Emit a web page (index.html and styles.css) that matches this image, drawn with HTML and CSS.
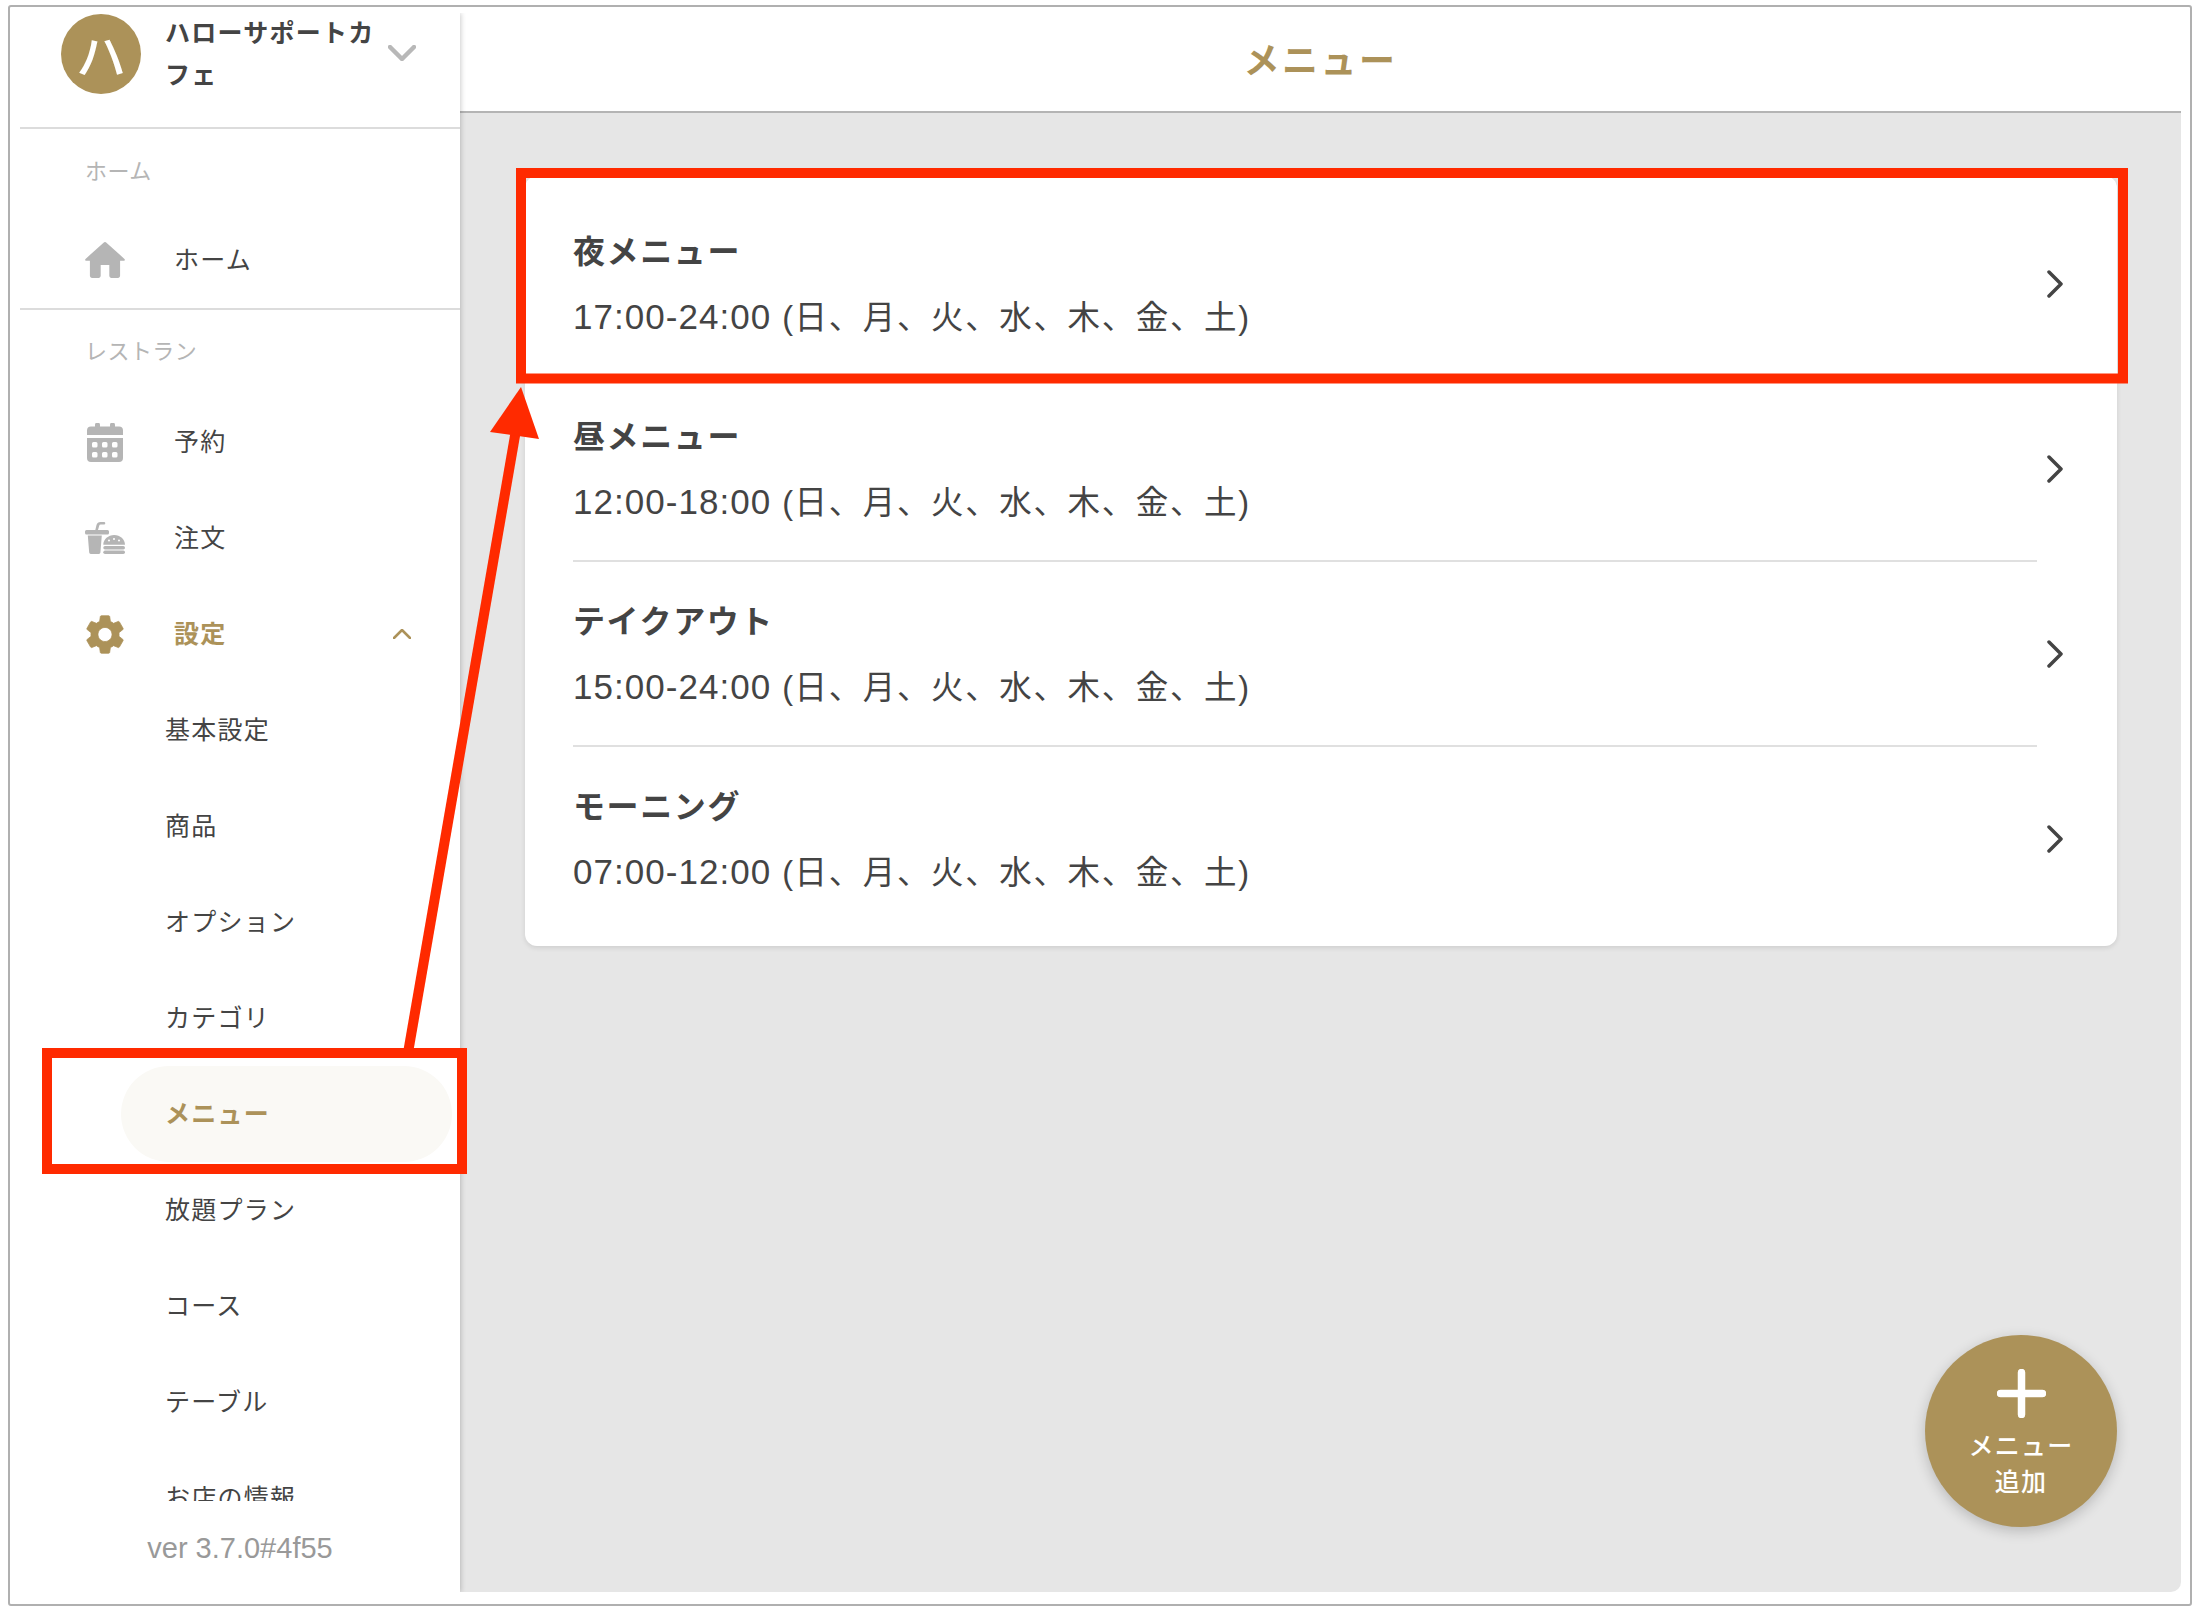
FILE: index.html
```html
<!DOCTYPE html>
<html lang="ja">
<head>
<meta charset="utf-8">
<title>メニュー</title>
<link rel="stylesheet" href="styles.css">
</head>
<body>
<div class="frame">
  <div class="app">
    <aside class="sidebar">
      <header class="shop">
        <div class="avatar">ハ</div>
        <div class="shop-name">ハローサポートカフェ</div>
        <svg class="shop-chevron" viewBox="0 0 28 16"><path d="M2 2l12 12L26 2"/></svg>
      </header>
      <nav class="nav">
        <section class="nav-group nav-group-line">
          <div class="nav-label">ホーム</div>
          <div class="nav-item">
            <span class="nav-icon"><svg class="icon-home" viewBox="2.8 3.3 18.4 16.7"><path d="M10 19v-5h4v5c0 .55.45 1 1 1h3c.55 0 1-.45 1-1v-7h1.7c.46 0 .68-.57.33-.87L12.67 3.6c-.38-.34-.96-.34-1.34 0l-8.36 7.53c-.34.3-.13.87.33.87H5v7c0 .55.45 1 1 1h3c.55 0 1-.45 1-1z"/></svg></span>
            <span>ホーム</span>
          </div>
        </section>
        <section class="nav-group">
          <div class="nav-label nav-label-tall">レストラン</div>
          <div class="nav-item">
            <span class="nav-icon"><svg class="icon-cal" viewBox="0 0 36 39"><path d="M8 2a2.5 2.5 0 0 1 5 0v1.500h10V2a2.500 2.500 0 0 1 5 0v1.500h4a4 4 0 0 1 4 4V12H0V7.500a4 4 0 0 1 4-4h4z"/><path fill-rule="evenodd" d="M0 15h36v20a4 4 0 0 1-4 4H4a4 4 0 0 1-4-4zM6.500 19a1.500 1.500 0 0 0-1.500 1.500v2.500a1.500 1.500 0 0 0 1.500 1.500h2.500a1.500 1.500 0 0 0 1.500-1.500v-2.500a1.500 1.500 0 0 0-1.500-1.500zm10 0a1.500 1.500 0 0 0-1.500 1.500v2.500a1.500 1.500 0 0 0 1.500 1.500h2.500a1.500 1.500 0 0 0 1.500-1.500v-2.500a1.500 1.500 0 0 0-1.500-1.500zm10 0a1.500 1.500 0 0 0-1.500 1.500v2.500a1.500 1.500 0 0 0 1.500 1.500h2.500a1.500 1.500 0 0 0 1.500-1.500v-2.500a1.500 1.500 0 0 0-1.500-1.500zm-20 10a1.500 1.500 0 0 0-1.500 1.500v2.500a1.500 1.500 0 0 0 1.500 1.500h2.500a1.500 1.500 0 0 0 1.500-1.500v-2.500a1.500 1.500 0 0 0-1.500-1.500zm10 0a1.500 1.500 0 0 0-1.500 1.500v2.500a1.500 1.500 0 0 0 1.500 1.500h2.500a1.500 1.500 0 0 0 1.500-1.500v-2.500a1.500 1.500 0 0 0-1.500-1.500zm10 0a1.500 1.500 0 0 0-1.500 1.500v2.500a1.500 1.500 0 0 0 1.500 1.500h2.500a1.500 1.500 0 0 0 1.500-1.500v-2.500a1.500 1.500 0 0 0-1.500-1.500z"/></svg></span>
            <span>予約</span>
          </div>
          <div class="nav-item">
            <span class="nav-icon"><svg class="icon-food" viewBox="0 0 40 32"><path d="M1.500 8h8.800l1.200-5C12 1.200 13.500 0 15.500 0H19a1.200 1.200 0 0 1 0 2.600h-3.300c-.8 0-1.300.4-1.500 1.100L13 8h9.500a1.500 1.500 0 0 1 1.500 1.500v1.500a1.500 1.500 0 0 1-1.500 1.500h-21A1.500 1.500 0 0 1 0 11V9.500A1.500 1.500 0 0 1 1.500 8z"/><path d="M2.800 13.500h14l-1.400 17a1.600 1.600 0 0 1-1.600 1.500H5.800a1.600 1.600 0 0 1-1.600-1.500z"/><path fill-rule="evenodd" d="M18.300 22.800c0-5.500 5-9.800 10.900-9.800S40 17.300 40 22.800zM24 17.500a1 1 0 1 0 0 2 1 1 0 0 0 0-2zm5-1.500a1 1 0 1 0 0 2 1 1 0 0 0 0-2zm5 1.500a1 1 0 1 0 0 2 1 1 0 0 0 0-2z"/><rect x="18.300" y="24" width="21.700" height="3.400" rx="1.700"/><rect x="18.300" y="28.600" width="21.700" height="3.400" rx="1.700"/></svg></span>
            <span>注文</span>
          </div>
          <div class="nav-item nav-item-open">
            <span class="nav-icon"><svg class="icon-gear" viewBox="2.400 1.500 19.200 21"><path fill-rule="evenodd" d="M19.140 12.940c.04-.3.06-.61.06-.94 0-.32-.02-.64-.07-.94l2.030-1.580c.18-.14.23-.41.12-.61l-1.920-3.320c-.12-.22-.37-.29-.59-.22l-2.390.96c-.5-.38-1.030-.7-1.620-.94l-.36-2.540c-.04-.24-.24-.41-.48-.41h-3.840c-.24 0-.43.17-.47.41l-.36 2.540c-.59.24-1.130.57-1.620.94l-2.390-.96c-.22-.08-.47 0-.59.22L2.740 8.870c-.12.21-.08.47.12.61l2.030 1.580c-.05.3-.09.63-.09.94s.02.64.07.94l-2.030 1.580c-.18.14-.23.41-.12.61l1.920 3.320c.12.22.37.29.59.22l2.390-.96c.5.38 1.030.7 1.620.94l.36 2.540c.05.24.24.41.48.41h3.840c.24 0 .44-.17.47-.41l.36-2.540c.59-.24 1.130-.56 1.620-.94l2.390.96c.22.08.47 0 .59-.22l1.920-3.320c.12-.22.07-.47-.12-.61l-2.010-1.580zM12 15.600c-1.980 0-3.600-1.620-3.600-3.600s1.620-3.600 3.600-3.600 3.600 1.620 3.600 3.600-1.620 3.600-3.600 3.600z"/></svg></span>
            <span class="nav-text-grow">設定</span>
            <svg class="nav-caret" viewBox="0 0 18 10"><path d="M1 9l8-8 8 8"/></svg>
          </div>
          <div class="sub-item">基本設定</div>
          <div class="sub-item">商品</div>
          <div class="sub-item">オプション</div>
          <div class="sub-item">カテゴリ</div>
          <div class="sub-item sub-item-active">メニュー</div>
          <div class="sub-item">放題プラン</div>
          <div class="sub-item">コース</div>
          <div class="sub-item">テーブル</div>
          <div class="sub-item">お店の情報</div>
        </section>
      </nav>
      <footer class="version">ver 3.7.0#4f55</footer>
    </aside>
    <main class="main">
      <header class="topbar">メニュー</header>
      <div class="content">
        <div class="card">
          <div class="row">
            <div class="row-body">
              <div class="row-title">夜メニュー</div>
              <div class="row-sub"><span class="row-time">17:00-24:00 </span>(日、月、火、水、木、金、土)</div>
            </div>
            <svg class="row-chevron" viewBox="0 0 16 28"><path d="M2 2l12 12L2 26"/></svg>
          </div>
          <div class="row">
            <div class="row-body">
              <div class="row-title">昼メニュー</div>
              <div class="row-sub"><span class="row-time">12:00-18:00 </span>(日、月、火、水、木、金、土)</div>
            </div>
            <svg class="row-chevron" viewBox="0 0 16 28"><path d="M2 2l12 12L2 26"/></svg>
          </div>
          <div class="row">
            <div class="row-body">
              <div class="row-title">テイクアウト</div>
              <div class="row-sub"><span class="row-time">15:00-24:00 </span>(日、月、火、水、木、金、土)</div>
            </div>
            <svg class="row-chevron" viewBox="0 0 16 28"><path d="M2 2l12 12L2 26"/></svg>
          </div>
          <div class="row row-last">
            <div class="row-body">
              <div class="row-title">モーニング</div>
              <div class="row-sub"><span class="row-time">07:00-12:00 </span>(日、月、火、水、木、金、土)</div>
            </div>
            <svg class="row-chevron" viewBox="0 0 16 28"><path d="M2 2l12 12L2 26"/></svg>
          </div>
        </div>
        <button class="fab">
          <svg class="fab-plus" viewBox="0 0 49 49"><path d="M24.500 3.500v42M3.500 24.500h42"/></svg>
          <span class="fab-text">メニュー<br>追加</span>
        </button>
      </div>
    </main>
  </div>
</div>
<svg class="annotation" viewBox="0 0 2198 1612" width="2198" height="1612">
  <rect x="521" y="173" width="1602" height="205.500" class="note-box"/>
  <rect x="47" y="1053" width="415" height="116" class="note-box"/>
  <path class="note-line" d="M408.500 1050L516 430"/>
  <path class="note-head" d="M521 387L490 432L539 439z"/>
</svg>
</body>
</html>
```

FILE: styles.css
```css
* { box-sizing: border-box; }
html, body { margin: 0; padding: 0; }
body {
  width: 2198px;
  height: 1612px;
  background: #fff;
  color: #444;
  font-family: "Noto Sans CJK JP", "Noto Sans", sans-serif;
  position: relative;
  overflow: hidden;
  padding: 5px 6px 6px 8px;
}
.frame {
  height: 100%;
  border: 2px solid #b0b0b0;
  border-radius: 3px;
  background: #fff;
  padding: 6px 9px 12px 10px;
}
.app { display: flex; height: 100%; }

/* sidebar */
.sidebar {
  width: 440px;
  flex: none;
  display: flex;
  flex-direction: column;
  background: #fff;
  box-shadow: 1px 0 5px rgba(0,0,0,.2);
  clip-path: inset(0 -10px 0 0);
  position: relative;
  z-index: 1;
}
.shop {
  height: 116px;
  flex: none;
  border-bottom: 2px solid #dcdcdc;
  display: flex;
  align-items: flex-start;
  padding: 1px 0 0 41px;
}
.avatar {
  width: 80px;
  height: 80px;
  border-radius: 50%;
  background: #ac9259;
  color: #fff;
  font-size: 50px;
  font-weight: 500;
  line-height: 78px;
  text-align: center;
  flex: none;
}
.shop-name {
  width: 220px;
  margin: -4px 0 0 24px;
  font-size: 25px;
  font-weight: 700;
  letter-spacing: .05em;
  line-height: 42px;
  color: #444;
}
.shop-chevron {
  width: 28px;
  height: 16px;
  margin: 31px 0 0 3px;
  flex: none;
  fill: none;
  stroke: #b8b8b8;
  stroke-width: 4.500;
  stroke-linecap: round;
  stroke-linejoin: round;
}
.nav { flex: 1; min-height: 0; overflow: hidden; }
.nav-group-line { border-bottom: 2px solid #dcdcdc; }
.nav-label {
  height: 83px;
  padding: 0 0 4px 65px;
  display: flex;
  align-items: center;
  font-size: 22px;
  letter-spacing: .02em;
  color: #b5b5b5;
}
.nav-label-tall { height: 84px; padding-bottom: 6px; }
.nav-item, .sub-item {
  height: 96px;
  display: flex;
  align-items: center;
  font-size: 25px;
  letter-spacing: .05em;
  color: #444;
  padding-bottom: 5px;
}
.nav-item { padding-left: 64px; }
.nav-icon {
  width: 40px;
  height: 40px;
  margin: 5px 49px 0 1px;
  flex: none;
  display: flex;
  align-items: center;
  justify-content: center;
  fill: #b5b5b5;
}
.icon-home { width: 40px; height: 36px; display: block; }
.icon-cal { width: 36px; height: 39px; display: block; }
.icon-food { width: 40px; height: 32px; display: block; }
.icon-gear { width: 40px; height: 41px; display: block; stroke: #ac9259; stroke-width: .4; stroke-linejoin: round; }
.nav-item-open { color: #ac9259; font-weight: 700; }
.nav-item-open .nav-icon { fill: #ac9259; }
.nav-text-grow { flex: 1; }
.nav-caret {
  width: 18px;
  height: 10px;
  margin: 5px 49px 0 0;
  fill: none;
  stroke: #ac9259;
  stroke-width: 2.500;
  stroke-linecap: round;
  stroke-linejoin: round;
}
.sub-item { padding-left: 145px; }
.sub-item-active {
  margin: 0 8px 0 101px;
  padding-left: 44px;
  border-radius: 48px;
  background: #faf9f5;
  color: #ac9259;
  font-weight: 700;
}
.version {
  height: 91px;
  flex: none;
  padding-top: 27px;
  text-align: center;
  font-family: "Liberation Sans", sans-serif;
  font-size: 29px;
  line-height: 40px;
  color: #999;
}

/* main */
.main {
  flex: 1;
  min-width: 0;
  display: flex;
  flex-direction: column;
}
.topbar {
  height: 100px;
  flex: none;
  border-bottom: 2px solid #b4b4b4;
  display: flex;
  align-items: center;
  justify-content: center;
  padding: 0 0 8px;
  background: #fff;
  font-size: 36px;
  font-weight: 700;
  letter-spacing: .07em;
  color: #ac9259;
}
.content {
  flex: 1;
  position: relative;
  background: #e6e6e6;
  border-bottom-right-radius: 10px;
  padding: 63px 64px 0 65px;
}
.card {
  background: #fff;
  border-radius: 12px;
  padding: 16px 0 14px;
  box-shadow: 0 2px 5px rgba(0,0,0,.1);
}
.row {
  height: 185px;
  display: flex;
  align-items: center;
  padding-left: 48px;
}
.row-body {
  width: 1464px;
  height: 185px;
  flex: none;
  border-bottom: 2px solid #e0e0e0;
  padding-top: 33px;
}
.row-last .row-body { border-bottom: 0; }
.row-title {
  font-size: 32px;
  font-weight: 700;
  letter-spacing: .05em;
  line-height: 48px;
  color: #444;
}
.row-sub {
  margin-top: 20px;
  font-family: "Liberation Sans", "Noto Sans CJK JP", sans-serif;
  font-size: 32.500px;
  letter-spacing: .05em;
  line-height: 48px;
  color: #444;
}
.row-time { font-size: 35px; letter-spacing: .03em; }
.row-chevron {
  width: 16px;
  height: 28px;
  margin: -2px 0 0 10px;
  flex: none;
  fill: none;
  stroke: #444;
  stroke-width: 3.500;
  stroke-linecap: round;
  stroke-linejoin: round;
}
.fab {
  position: absolute;
  right: 64px;
  bottom: 65px;
  width: 192px;
  height: 192px;
  border: 0;
  border-radius: 50%;
  background: #ac9259;
  box-shadow: 0 4px 14px rgba(0,0,0,.2);
  color: #fff;
  padding: 34px 0 0;
  display: flex;
  flex-direction: column;
  align-items: center;
  font-family: inherit;
}
.fab-plus {
  width: 49px;
  height: 49px;
  flex: none;
  fill: none;
  stroke: #fff;
  stroke-width: 7.500;
  stroke-linecap: round;
}
.fab-text {
  margin-top: 8px;
  font-size: 25px;
  font-weight: 500;
  letter-spacing: .05em;
  line-height: 36px;
  text-align: center;
}

/* red annotation drawn over the screenshot */
.annotation { position: absolute; left: 0; top: 0; z-index: 5; pointer-events: none; }
.note-box { fill: none; stroke: #ff2a00; stroke-width: 10; }
.note-line { fill: none; stroke: #ff2a00; stroke-width: 10; }
.note-head { fill: #ff2a00; }
```
